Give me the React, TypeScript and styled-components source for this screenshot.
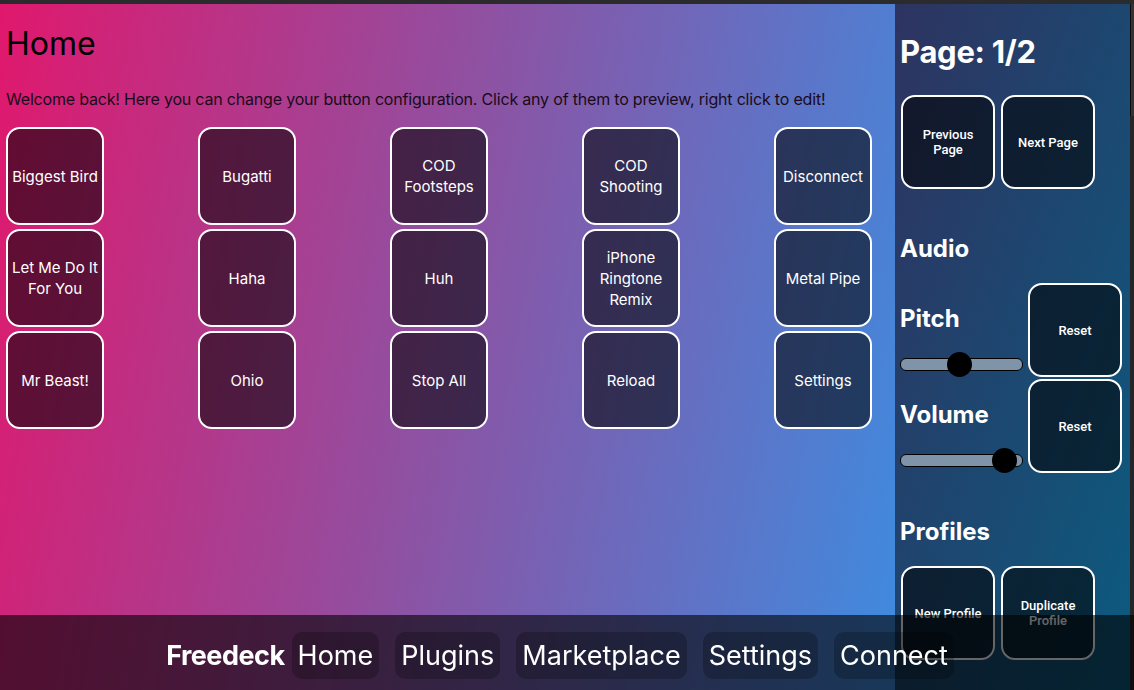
import React from "react";
import styled, { createGlobalStyle } from "styled-components";

const GlobalStyle = createGlobalStyle`
  html, body {
    margin: 0;
    padding: 0;
    background: #2a2a2d;
    overflow: hidden;
  }
  body {
    font-family: Inter, "DejaVu Sans", sans-serif;
  }
  * { box-sizing: border-box; }
`;

const Frame = styled.div`
  display: flex;
  flex-direction: column;
  width: 1134px;
  height: 690px;
  background: #2a2a2d;
`;

const TopStrip = styled.div`
  height: 4px;
  flex: none;
  background: #2b2b2e;
`;

const Body = styled.div`
  display: flex;
  flex: 1;
  min-height: 0;
`;

const Main = styled.main`
  flex: 1;
  min-width: 0;
  padding: 0 0 0 6px;
  background: linear-gradient(100deg, #e0186d 0%, #8c53a4 50%, #3e8bdf 100%);
  color: #000;
`;

const Title = styled.h1`
  margin: 20px 0 0;
  font-size: 32px;
  line-height: 40px;
  font-weight: 400;
`;

const Intro = styled.p`
  margin: 25px 0 0;
  font-size: 16px;
  line-height: 20px;
  letter-spacing: -0.19px;
  color: #1a0a1a;
`;

const Grid = styled.div`
  margin-top: 18px;
  width: 866px;
  display: grid;
  grid-template-columns: repeat(5, 98px);
  justify-content: space-between;
  row-gap: 4px;
`;

const DeckButton = styled.button`
  width: 98px;
  height: 98px;
  border: 2px solid #fff;
  border-radius: 14px;
  background: rgba(0, 0, 0, 0.55);
  color: #fff;
  font-family: Inter, "DejaVu Sans", sans-serif;
  font-size: 15px;
  line-height: 21px;
  padding: 0 2px;
  display: flex;
  align-items: center;
  justify-content: center;
  text-align: center;
`;

const Sidebar = styled.aside`
  width: 235px;
  flex: none;
  padding: 0 0 0 5px;
  background: linear-gradient(to bottom right, #2e3360, #0c5b80);
  color: #fff;
  display: flex;
  flex-direction: column;
`;

const PageTitle = styled.h2`
  margin: 28px 0 0;
  font-size: 31px;
  line-height: 40px;
  font-weight: 700;
  letter-spacing: -0.3px;
`;

const SectionTitle = styled.h3<{ $gap: number }>`
  margin: ${(p) => p.$gap}px 0 0;
  font-size: 24px;
  line-height: 30px;
  font-weight: 700;
`;

const ButtonRow = styled.div<{ $gap: number }>`
  display: flex;
  gap: 6px;
  margin: ${(p) => p.$gap}px 0 0 1px;
`;

const SideButton = styled.button`
  width: 94px;
  height: 94px;
  flex: none;
  border: 2px solid #fff;
  border-radius: 14px;
  background: rgba(0, 0, 0, 0.55);
  color: #fff;
  font-family: Roboto, "Liberation Sans", sans-serif;
  font-weight: 500;
  font-size: 13px;
  line-height: 15px;
  padding: 0 8px;
  display: flex;
  align-items: center;
  justify-content: center;
  text-align: center;
`;

const ControlStack = styled.div`
  margin-top: 19px;
  display: flex;
  flex-direction: column;
  gap: 2px;
`;

const ControlRow = styled.div`
  display: flex;
  gap: 5px;
`;

const ControlColumn = styled.div`
  width: 123px;
  padding-top: 21px;
  display: flex;
  flex-direction: column;
`;

const ControlLabel = styled.span`
  font-size: 24px;
  line-height: 30px;
  font-weight: 700;
`;

const Range = styled.input`
  -webkit-appearance: none;
  appearance: none;
  width: 123px;
  height: 25px;
  margin: 18px 0 0;
  padding: 0;
  background: transparent;

  &::-webkit-slider-runnable-track {
    height: 13px;
    background: #7f94a9;
    border: 1px solid #000;
    border-radius: 6px;
  }
  &::-webkit-slider-thumb {
    -webkit-appearance: none;
    width: 25px;
    height: 25px;
    margin-top: -7px;
    border-radius: 50%;
    background: #000;
    border: none;
  }
`;

const ScrollTrack = styled.div`
  width: 4px;
  flex: none;
  background: #262628;
  display: flex;
  flex-direction: column;
`;

const ScrollThumb = styled.div`
  height: 112px;
  background: #343437;
  border-left: 1px solid #0d0d0f;
`;

const NavBar = styled.nav`
  position: fixed;
  left: 0;
  right: 0;
  bottom: 0;
  height: 75px;
  background: rgba(0, 0, 0, 0.6);
  display: flex;
  align-items: center;
  justify-content: center;
  padding: 6px 14px 0 0;
  color: #fff;
`;

const Brand = styled.span`
  font-size: 27px;
  font-weight: 700;
  margin-right: 7px;
  letter-spacing: -0.5px;
`;

const NavLinks = styled.div`
  display: flex;
  gap: 16px;
`;

const NavPill = styled.a`
  height: 47px;
  line-height: 47px;
  padding: 0 6px;
  border-radius: 10px;
  background: rgba(0, 0, 0, 0.24);
  font-size: 27px;
  color: #fff;
  text-decoration: none;
`;

const deck = [
  "Biggest Bird",
  "Bugatti",
  "COD Footsteps",
  "COD Shooting",
  "Disconnect",
  "Let Me Do It For You",
  "Haha",
  "Huh",
  "iPhone Ringtone Remix",
  "Metal Pipe",
  "Mr Beast!",
  "Ohio",
  "Stop All",
  "Reload",
  "Settings",
];

const controls = [
  { label: "Pitch", min: 0, max: 2, value: 0.96 },
  { label: "Volume", min: 0, max: 1, value: 0.95 },
];

const links = ["Home", "Plugins", "Marketplace", "Settings", "Connect"];

export default function App() {
  return (
    <Frame>
      <GlobalStyle />
      <TopStrip />
      <Body>
        <Main>
          <Title>Home</Title>
          <Intro>
            Welcome back! Here you can change your button configuration. Click any of them to
            preview, right click to edit!
          </Intro>
          <Grid>
            {deck.map((name) => (
              <DeckButton key={name}>{name}</DeckButton>
            ))}
          </Grid>
        </Main>
        <Sidebar>
          <PageTitle>Page: 1/2</PageTitle>
          <ButtonRow $gap={23}>
            <SideButton>Previous Page</SideButton>
            <SideButton>Next Page</SideButton>
          </ButtonRow>
          <SectionTitle $gap={45}>Audio</SectionTitle>
          <ControlStack>
            {controls.map((c) => (
              <ControlRow key={c.label}>
                <ControlColumn>
                  <ControlLabel>{c.label}</ControlLabel>
                  <Range type="range" min={c.min} max={c.max} step={0.01} defaultValue={c.value} />
                </ControlColumn>
                <SideButton>Reset</SideButton>
              </ControlRow>
            ))}
          </ControlStack>
          <SectionTitle $gap={44}>Profiles</SectionTitle>
          <ButtonRow $gap={19}>
            <SideButton>New Profile</SideButton>
            <SideButton>Duplicate Profile</SideButton>
          </ButtonRow>
        </Sidebar>
        <ScrollTrack>
          <ScrollThumb />
        </ScrollTrack>
      </Body>
      <NavBar>
        <Brand>Freedeck</Brand>
        <NavLinks>
          {links.map((l) => (
            <NavPill key={l}>{l}</NavPill>
          ))}
        </NavLinks>
      </NavBar>
    </Frame>
  );
}
